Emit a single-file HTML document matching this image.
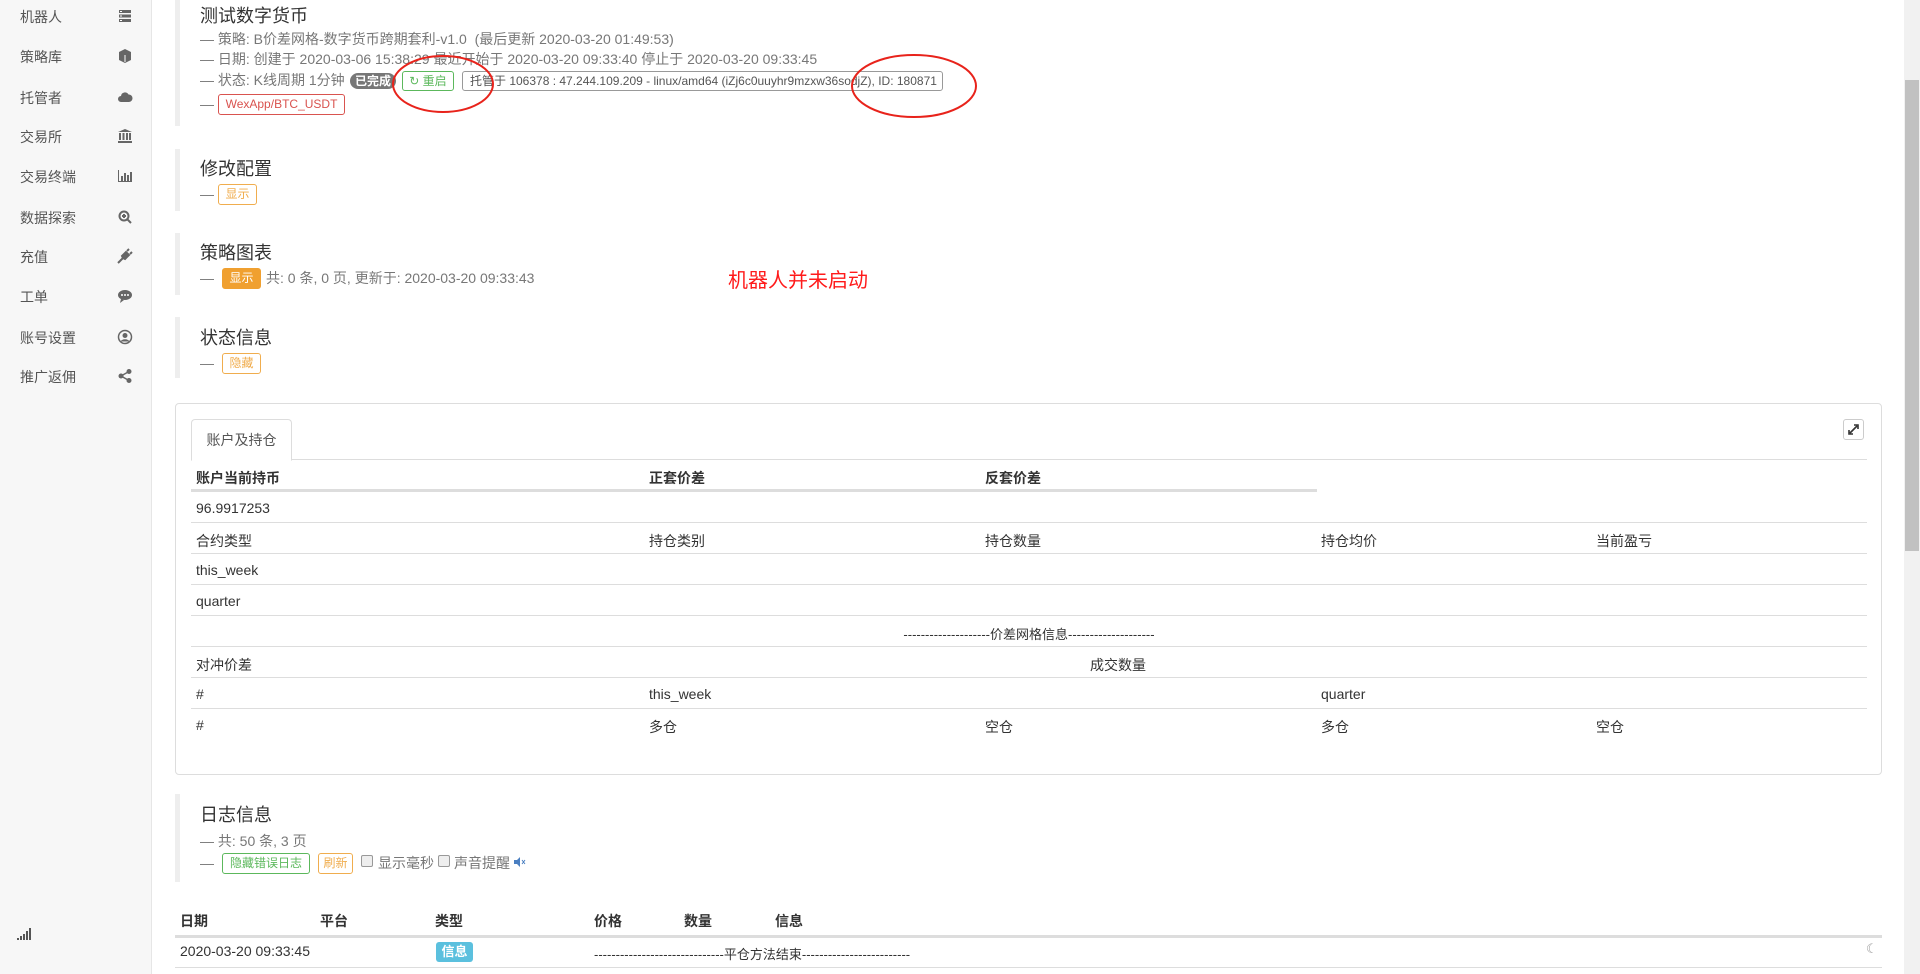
<!DOCTYPE html>
<html><head><meta charset="utf-8">
<style>
*{margin:0;padding:0;box-sizing:border-box}
body{width:1920px;height:974px;overflow:hidden;background:#fff;font-family:"Liberation Sans","Noto Sans CJK SC",sans-serif;font-size:14px;color:#333;position:relative}
.a{position:absolute;white-space:nowrap}
#side{position:absolute;left:0;top:0;width:152px;height:974px;background:#f7f7f7;border-right:1px solid #e6e6e6}
.si{position:absolute;left:20px;font-size:14px;color:#555;line-height:20px}
.ic{position:absolute;left:117px;width:16px;height:16px}
.bar{position:absolute;left:175px;width:5px;background:#eee}
.ttl{font-size:18px;color:#333;line-height:24px}
.ln{font-size:14px;color:#777;line-height:20px}
.btn{position:absolute;border:1px solid;border-radius:3px;font-size:12px;text-align:center;line-height:18px}
.or{border-color:#f0ad4e;color:#f0ad4e}
.gr{border-color:#5cb85c;color:#5cb85c}
.row{position:absolute;left:191px;width:1676px;border-bottom:1px solid #ddd;height:31px}
.c{position:absolute;top:8px;font-size:14px;color:#333;white-space:nowrap}
</style></head><body>
<div id="side">
<div class="si" style="top:7px">机器人</div>
<div class="si" style="top:47px">策略库</div>
<div class="si" style="top:88px">托管者</div>
<div class="si" style="top:127px">交易所</div>
<div class="si" style="top:167px">交易终端</div>
<div class="si" style="top:208px">数据探索</div>
<div class="si" style="top:247px">充值</div>
<div class="si" style="top:287px">工单</div>
<div class="si" style="top:328px">账号设置</div>
<div class="si" style="top:367px">推广返佣</div>
<svg class="ic" style="top:8px" viewBox="0 0 16 16" fill="#666"><rect x="2" y="2" width="12" height="3"/><rect x="2" y="6.5" width="12" height="3"/><rect x="2" y="11" width="12" height="3"/><rect x="3" y="3" width="2" height="1" fill="#fff"/><rect x="3" y="7.5" width="2" height="1" fill="#fff"/><rect x="3" y="12" width="2" height="1" fill="#fff"/></svg>
<svg class="ic" style="top:48px" viewBox="0 0 16 16" fill="#666"><path d="M8 1L14 4V12L8 15L2 12V4Z"/><path d="M8 7V14" stroke="#fff" stroke-width="1"/></svg>
<svg class="ic" style="top:89px" viewBox="0 0 16 16" fill="#666"><path d="M4 13a3 3 0 010-6 4 4 0 017.5-1.5A3.5 3.5 0 0112 13Z"/></svg>
<svg class="ic" style="top:128px" viewBox="0 0 16 16" fill="#666"><path d="M8 1L15 4H1Z"/><rect x="2" y="5" width="2" height="7"/><rect x="5.5" y="5" width="2" height="7"/><rect x="9" y="5" width="2" height="7"/><rect x="12" y="5" width="2" height="7"/><rect x="1" y="13" width="14" height="2"/></svg>
<svg class="ic" style="top:168px" viewBox="0 0 16 16" fill="#666"><rect x="1" y="2" width="1" height="12"/><rect x="1" y="13" width="14" height="1"/><rect x="4" y="8" width="2" height="5"/><rect x="7" y="5" width="2" height="8"/><rect x="10" y="7" width="2" height="6"/><rect x="13" y="4" width="2" height="9"/></svg>
<svg class="ic" style="top:209px" viewBox="0 0 16 16"><circle cx="7" cy="7" r="4.5" stroke="#666" stroke-width="2" fill="none"/><path d="M10 10L14 14M7 5V9M5 7H9" stroke="#666" stroke-width="2"/></svg>
<svg class="ic" style="top:248px" viewBox="0 0 16 16" fill="#666"><path d="M3 13L6 10 5 8 9 4 12 7 8 11 6 10M10 3l2-2M13 6l2-2M1 15l3-3" stroke="#666" stroke-width="2"/></svg>
<svg class="ic" style="top:288px" viewBox="0 0 16 16" fill="#666"><ellipse cx="8" cy="7" rx="7" ry="5"/><path d="M4 11L3 15 7 12Z"/><circle cx="5" cy="7" r="1" fill="#fff"/><circle cx="8" cy="7" r="1" fill="#fff"/><circle cx="11" cy="7" r="1" fill="#fff"/></svg>
<svg class="ic" style="top:329px" viewBox="0 0 16 16"><circle cx="8" cy="8" r="6.5" stroke="#666" stroke-width="1.5" fill="none"/><circle cx="8" cy="6.5" r="2.5" fill="#666"/><path d="M3.5 12.5a5 4 0 019 0" fill="#666"/></svg>
<svg class="ic" style="top:368px" viewBox="0 0 16 16" fill="#666"><circle cx="12" cy="3.5" r="2.5"/><circle cx="4" cy="8" r="2.5"/><circle cx="12" cy="12.5" r="2.5"/><path d="M12 3.5L4 8 12 12.5" stroke="#666" stroke-width="1.5" fill="none"/></svg>
<svg class="a" style="left:16px;top:927px" width="16" height="14" viewBox="0 0 16 14" fill="#555"><rect x="1" y="11" width="2" height="2"/><rect x="4" y="9" width="2" height="4"/><rect x="7" y="7" width="2" height="6"/><rect x="10" y="4" width="2" height="9"/><rect x="13" y="1" width="2" height="12"/></svg>
</div>

<div class="bar" style="top:0;height:126px"></div>
<div class="a ttl" style="left:200px;top:4px">测试数字货币</div>
<div class="a ln" style="left:200px;top:29px">— 策略: B价差网格-数字货币跨期套利-v1.0&nbsp; (最后更新 2020-03-20 01:49:53)</div>
<div class="a ln" style="left:200px;top:49px">— 日期: 创建于 2020-03-06 15:38:29 最近开始于 2020-03-20 09:33:40 停止于 2020-03-20 09:33:45</div>
<div class="a ln" style="left:200px;top:70px">— 状态: K线周期 1分钟</div>
<div class="a" style="left:350px;top:73px;width:46px;height:16px;background:#777;color:#fff;border-radius:8px;font-size:12px;font-weight:bold;text-align:center;line-height:16px">已完成</div>
<div class="btn gr" style="left:402px;top:71px;width:52px;height:20px">&#x21bb; 重启</div>
<div class="btn" style="left:462px;top:71px;width:481px;height:20px;border-color:#999;color:#555;text-align:left;padding-left:7px">托管于 106378 : 47.244.109.209 - linux/amd64 (iZj6c0uuyhr9mzxw36sodjZ), ID: 180871</div>
<div class="a ln" style="left:200px;top:94px">—</div>
<div class="btn" style="left:218px;top:94px;width:127px;height:21px;border-color:#d9534f;color:#d9534f;line-height:19px">WexApp/BTC_USDT</div>
<svg class="a" style="left:0;top:0" width="1000" height="130"><ellipse cx="443" cy="84" rx="50" ry="28" fill="none" stroke="#e8231b" stroke-width="2"/><ellipse cx="914" cy="86" rx="62" ry="31" fill="none" stroke="#e8231b" stroke-width="2"/></svg>

<div class="bar" style="top:149px;height:62px"></div>
<div class="a ttl" style="left:200px;top:157px">修改配置</div>
<div class="a ln" style="left:200px;top:184px">—</div>
<div class="btn or" style="left:218px;top:184px;width:39px;height:21px">显示</div>

<div class="bar" style="top:233px;height:62px"></div>
<div class="a ttl" style="left:200px;top:241px">策略图表</div>
<div class="a ln" style="left:200px;top:268px">—</div>
<div class="btn" style="left:222px;top:268px;width:39px;height:21px;background:#f0a030;border-color:#f0a030;color:#fff">显示</div>
<div class="a ln" style="left:266px;top:268px">共: 0 条, 0 页, 更新于: 2020-03-20 09:33:43</div>
<div class="a" style="left:728px;top:264px;font-size:20px;color:#ff1a1a">机器人并未启动</div>

<div class="bar" style="top:317px;height:61px"></div>
<div class="a ttl" style="left:200px;top:326px">状态信息</div>
<div class="a ln" style="left:200px;top:353px">—</div>
<div class="btn or" style="left:222px;top:353px;width:39px;height:21px">隐藏</div>

<div class="a" style="left:175px;top:403px;width:1707px;height:372px;border:1px solid #ddd;border-radius:4px"></div>
<div class="a" style="left:191px;top:459px;width:1676px;height:1px;background:#ddd"></div>
<div class="a" style="left:191px;top:419px;width:101px;height:42px;border:1px solid #ddd;border-bottom:1px solid #fff;border-radius:4px 4px 0 0;background:#fff;color:#555;font-size:14px;text-align:center;line-height:40px">账户及持仓</div>
<div class="a" style="left:1843px;top:419px;width:21px;height:21px;border:1px solid #ccc;border-radius:3px"></div>
<svg class="a" style="left:1847px;top:423px" width="13" height="13" viewBox="0 0 13 13"><path d="M3 10L10 3M7 2H11V6M2 7V11H6" stroke="#333" stroke-width="1.6" fill="none"/></svg>

<div class="a" style="left:191px;top:460px;width:1126px;height:32px;border-bottom:3px solid #ddd"></div>
<div class="c" style="left:196px;top:468px;font-weight:bold">账户当前持币</div>
<div class="c" style="left:649px;top:468px;font-weight:bold">正套价差</div>
<div class="c" style="left:985px;top:468px;font-weight:bold">反套价差</div>

<div class="row" style="top:492px"><div class="c" style="left:5px">96.9917253</div></div>
<div class="row" style="top:523px"><div class="c" style="left:5px">合约类型</div><div class="c" style="left:458px">持仓类别</div><div class="c" style="left:794px">持仓数量</div><div class="c" style="left:1130px">持仓均价</div><div class="c" style="left:1405px">当前盈亏</div></div>
<div class="row" style="top:554px"><div class="c" style="left:5px">this_week</div></div>
<div class="row" style="top:585px"><div class="c" style="left:5px">quarter</div></div>
<div class="row" style="top:616px"><div class="c" style="left:0;width:1676px;text-align:center;font-size:13px">--------------------价差网格信息--------------------</div></div>
<div class="row" style="top:647px"><div class="c" style="left:5px">对冲价差</div><div class="c" style="left:899px">成交数量</div></div>
<div class="row" style="top:678px"><div class="c" style="left:5px">#</div><div class="c" style="left:458px">this_week</div><div class="c" style="left:1130px">quarter</div></div>
<div class="row" style="top:709px;border-bottom:none"><div class="c" style="left:5px">#</div><div class="c" style="left:458px">多仓</div><div class="c" style="left:794px">空仓</div><div class="c" style="left:1130px">多仓</div><div class="c" style="left:1405px">空仓</div></div>

<div class="bar" style="top:794px;height:88px"></div>
<div class="a ttl" style="left:200px;top:803px">日志信息</div>
<div class="a ln" style="left:200px;top:831px">— 共: 50 条, 3 页</div>
<div class="a ln" style="left:200px;top:853px">—</div>
<div class="btn gr" style="left:222px;top:853px;width:88px;height:21px">隐藏错误日志</div>
<div class="btn or" style="left:318px;top:853px;width:35px;height:21px">刷新</div>
<div class="a" style="left:361px;top:855px;width:12px;height:12px;border:1px solid #999;border-radius:2px;background:#eee"></div>
<div class="a ln" style="left:378px;top:853px">显示毫秒</div>
<div class="a" style="left:438px;top:855px;width:12px;height:12px;border:1px solid #999;border-radius:2px;background:#eee"></div>
<div class="a ln" style="left:454px;top:853px">声音提醒</div>
<svg class="a" style="left:514px;top:857px" width="12" height="10" viewBox="0 0 12 10" fill="#4a7fc1"><path d="M0 3H3L6 0V10L3 7H0Z"/><path d="M8 3L11 7M11 3L8 7" stroke="#4a7fc1" stroke-width="1"/></svg>

<div class="a" style="left:175px;top:905px;width:1707px;height:33px;border-bottom:3px solid #ddd"></div>
<div class="c" style="left:180px;top:911px;font-weight:bold">日期</div>
<div class="c" style="left:320px;top:911px;font-weight:bold">平台</div>
<div class="c" style="left:435px;top:911px;font-weight:bold">类型</div>
<div class="c" style="left:594px;top:911px;font-weight:bold">价格</div>
<div class="c" style="left:684px;top:911px;font-weight:bold">数量</div>
<div class="c" style="left:775px;top:911px;font-weight:bold">信息</div>
<div class="a" style="left:175px;top:938px;width:1707px;height:30px;border-bottom:1px solid #ddd"></div>
<div class="c" style="left:180px;top:943px">2020-03-20 09:33:45</div>
<div class="a" style="left:436px;top:942px;width:37px;height:20px;background:#5bc0de;color:#fff;border-radius:3px;font-size:13px;font-weight:bold;text-align:center;line-height:20px">信息</div>
<div class="c" style="left:594px;top:944px;font-size:13px">------------------------------平仓方法结束-------------------------</div>
<div class="a" style="left:1866px;top:941px;font-size:13px;color:#999">☾</div>

<div class="a" style="left:1904px;top:0;width:16px;height:974px;background:#f1f1f1"></div>
<div class="a" style="left:1905px;top:80px;width:14px;height:471px;background:#c1c1c1"></div>
</body></html>
